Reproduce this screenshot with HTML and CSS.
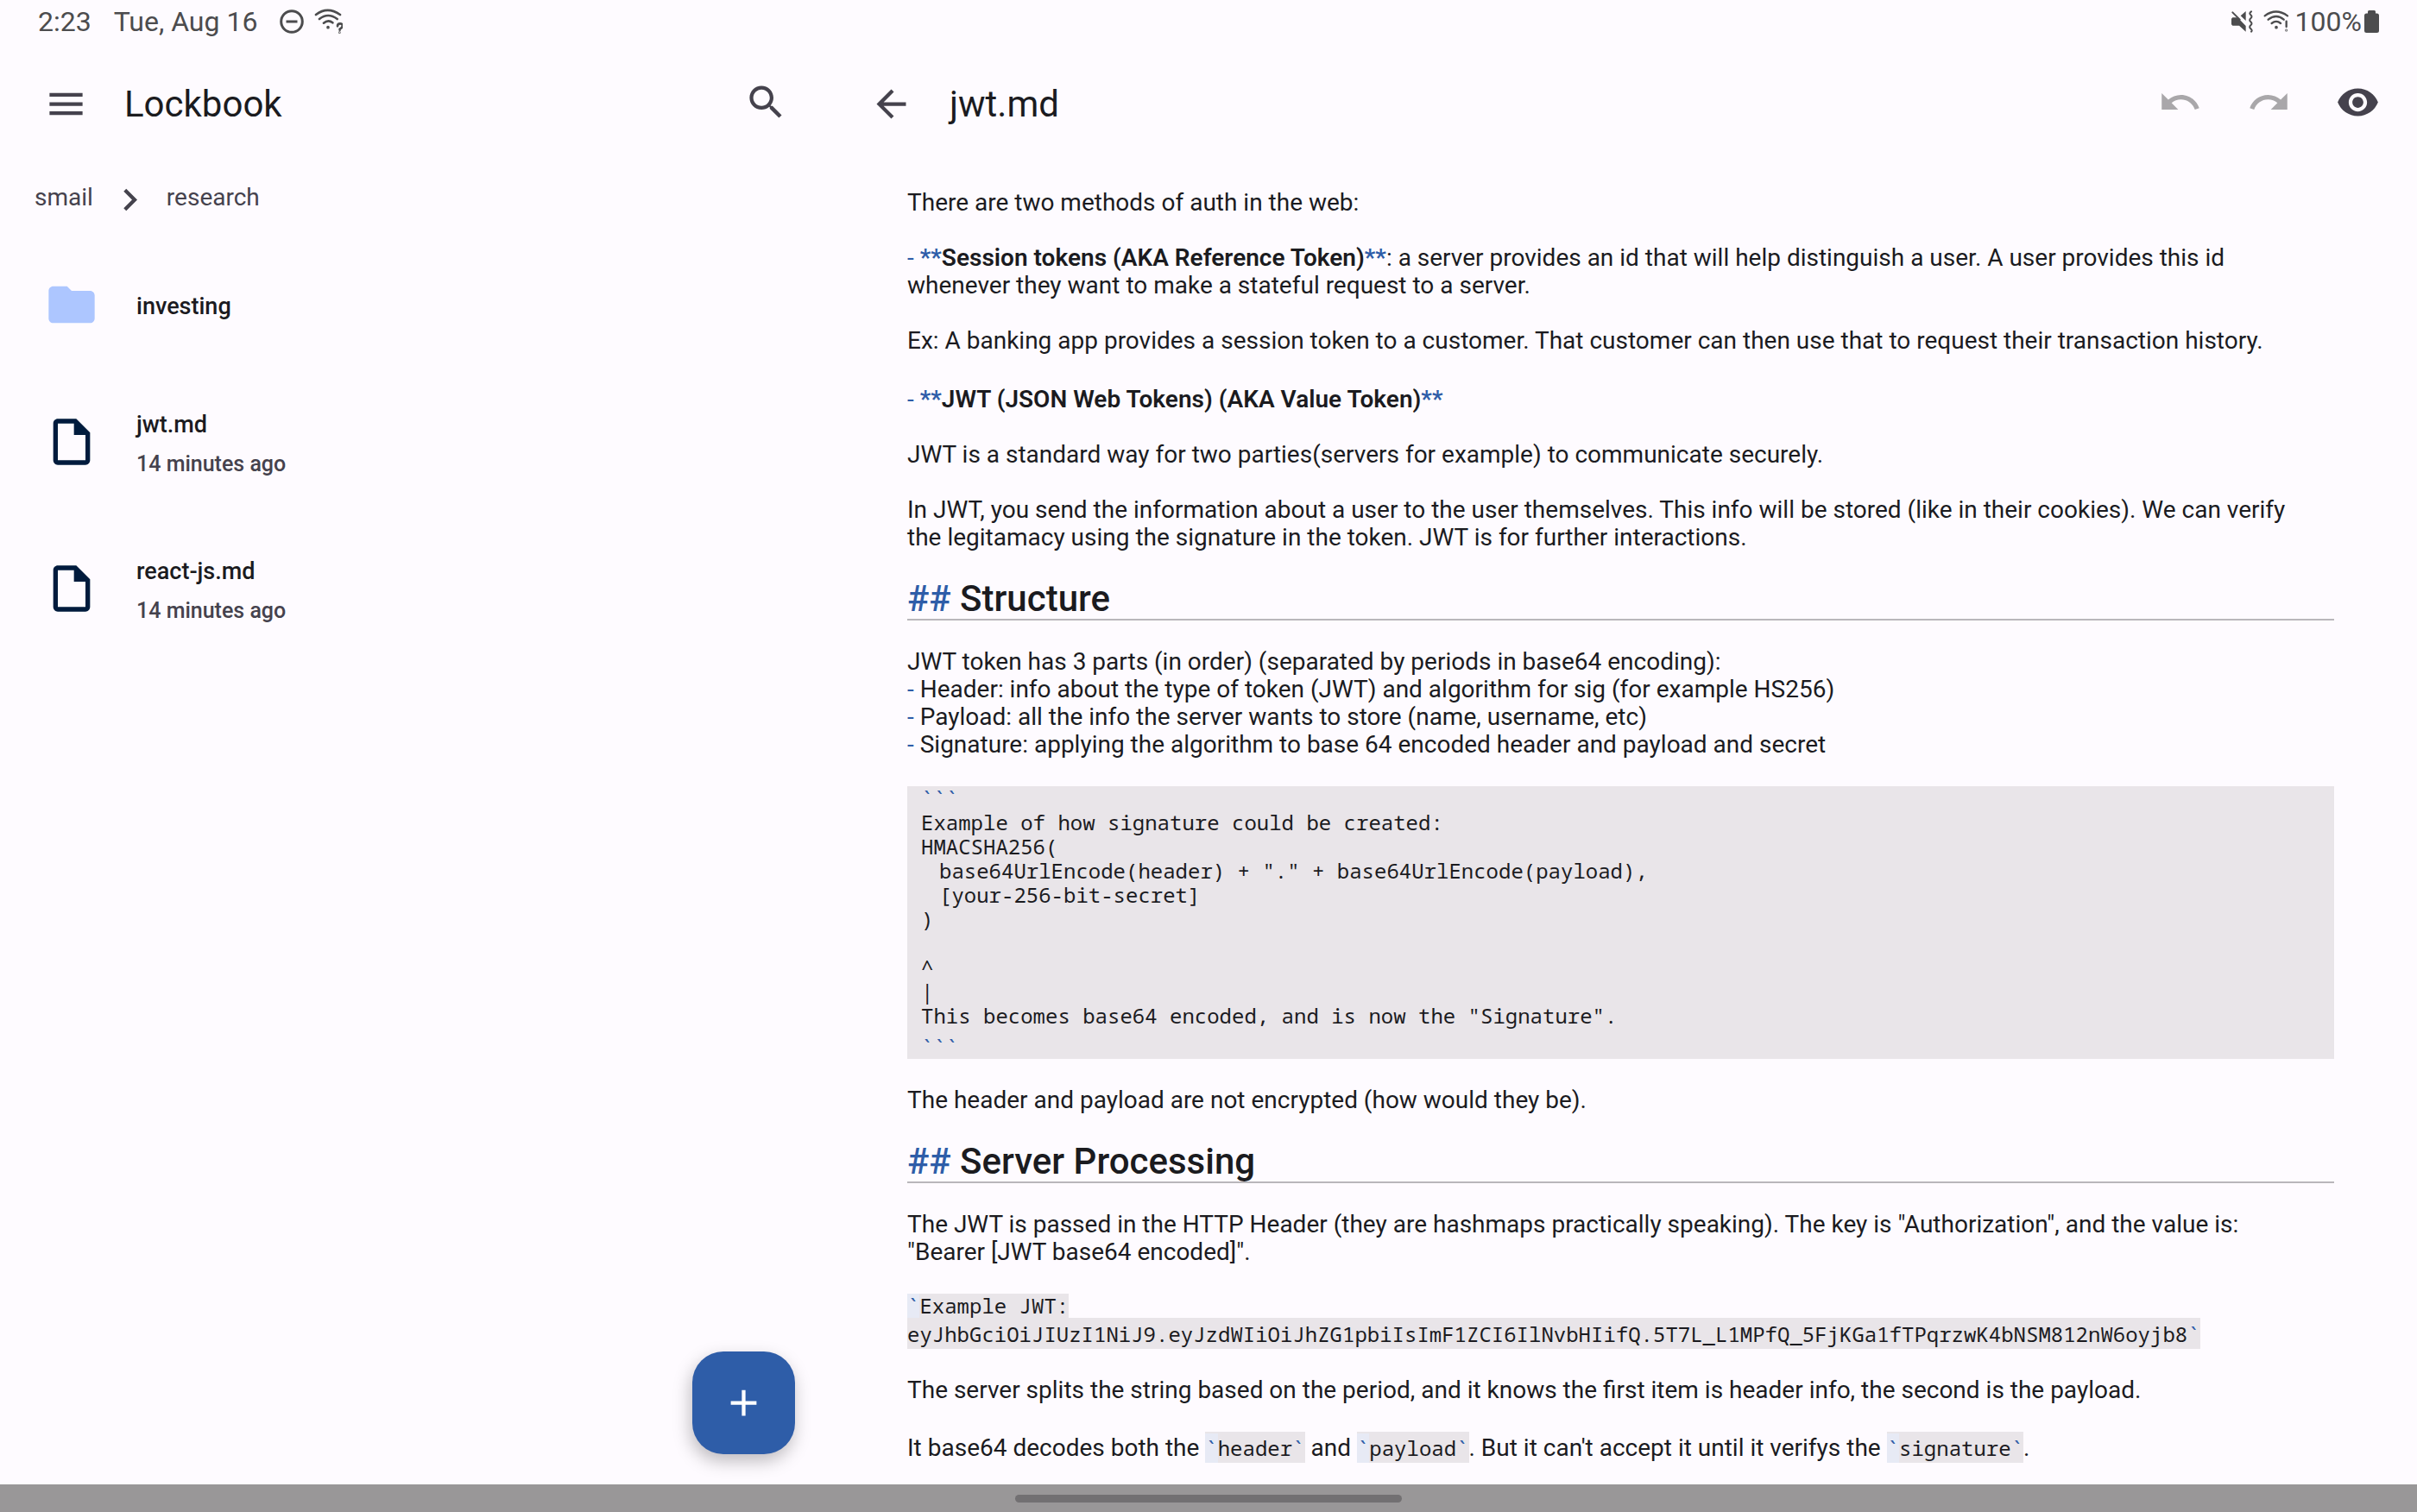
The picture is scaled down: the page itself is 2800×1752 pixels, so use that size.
FILE: index.html
```html
<!DOCTYPE html>
<html lang="en">
<head>
<meta charset="utf-8">
<title>Lockbook</title>
<link rel="stylesheet" href="styles.css">
</head>
<body>
<header class="status">
  <div class="status-group status-left">
    <span class="clock">2:23</span>
    <span>Tue, Aug 16</span>
    <span class="status-icons">
      <svg width="28" height="28" viewBox="0 0 28 28" fill="none" stroke="currentColor" stroke-width="3" aria-hidden="true"><circle cx="14" cy="14" r="12.3"/><path d="M7.5 14h13"/></svg>
      <svg width="33" height="30" viewBox="0 0 99 90" fill="none" stroke="currentColor" stroke-width="8" stroke-linecap="round" aria-hidden="true"><path d="M6 21Q46-10 90 21M18 36q30-24 62 0M33 50q16-13 31-1M81 61q0-9 9-9t8 9q0 5-9 10v3"/><circle cx="48" cy="65" r="3" stroke-width="5"/><circle cx="88" cy="83" r="1" stroke-width="6"/></svg>
    </span>
  </div>
  <div class="status-group status-right">
    <svg class="muted" width="26" height="26" viewBox="0 0 78 78" fill="currentColor" aria-hidden="true"><path d="M3 29l4-4h14l6 2 26 27v20L30 53H7l-4-4zM35 19L53 3v33z"/><path d="M7 7l25 25M72 4q-9 6-2 12t0 12 0 12 0 12 0 12 2 10" fill="none" stroke="currentColor" stroke-width="6" stroke-linecap="round"/></svg>
    <svg width="30" height="26" viewBox="0 0 90 78" fill="none" stroke="currentColor" stroke-width="7" stroke-linecap="round" aria-hidden="true"><path d="M5 19Q44-10 84 19M17 32q28-22 54 0M29 45q16-13 31 0M80 38v19"/><circle cx="45" cy="59" r="3" stroke-width="5"/><circle cx="80" cy="69" r="1" stroke-width="7"/></svg>
    <span class="level">100%</span>
    <svg width="17" height="26" viewBox="0 0 17 26" fill="currentColor" aria-hidden="true"><path d="M4 3.500V1.500Q4 0 5.500 0h6Q13 0 13 1.500v2h1.500Q17 3.500 17 6v17.500q0 2.500-2.500 2.500h-12Q0 26 0 23.500V6q0-2.500 2.500-2.500z"/></svg>
  </div>
</header>

<main class="panes">
  <section class="files">
    <div class="appbar">
      <button class="icon-button" aria-label="Menu"><svg viewBox="0 0 24 24"><path d="M3 18h18v-2H3v2zm0-5h18v-2H3v2zm0-7v2h18V6H3z"/></svg></button>
      <h1>Lockbook</h1>
      <div class="actions">
        <button class="icon-button" aria-label="Search"><svg viewBox="0 0 24 24"><path d="M15.500 14h-.79l-.28-.27C15.410 12.590 16 11.110 16 9.500 16 5.910 13.090 3 9.500 3S3 5.910 3 9.500 5.910 16 9.500 16c1.610 0 3.090-.59 4.230-1.570l.27.28v.79l5 4.990L20.490 19l-4.990-5zm-6 0C7.010 14 5 11.990 5 9.500S7.010 5 9.500 5 14 7.010 14 9.500 11.990 14 9.500 14z"/></svg></button>
      </div>
    </div>
    <nav class="crumbs" aria-label="Path">
      <a href="#smail">smail</a>
      <svg class="chevron" viewBox="0 0 24 24" aria-hidden="true"><path d="M10 6L8.590 7.410 13.170 12l-4.580 4.590L10 18l6-6z"/></svg>
      <a href="#research">research</a>
    </nav>
    <ul class="list">
      <li><a class="row folder" href="#investing">
        <svg viewBox="0 0 24 24" aria-hidden="true"><path d="M10 4H4c-1.100 0-1.990.9-1.990 2L2 18c0 1.100.9 2 2 2h16c1.100 0 2-.9 2-2V8c0-1.100-.9-2-2-2h-8l-2-2z"/></svg>
        <span class="label"><span class="name">investing</span></span>
      </a></li>
      <li><a class="row" href="#jwt">
        <svg viewBox="0 0 24 24" aria-hidden="true"><path d="M14 2H6c-1.100 0-1.990.9-1.990 2L4 20c0 1.100.89 2 1.990 2H18c1.100 0 2-.9 2-2V8l-6-6zM6 20V4h7v5h5v11H6z"/></svg>
        <span class="label"><span class="name">jwt.md</span><span class="time">14 minutes ago</span></span>
      </a></li>
      <li><a class="row" href="#react-js">
        <svg viewBox="0 0 24 24" aria-hidden="true"><path d="M14 2H6c-1.100 0-1.990.9-1.990 2L4 20c0 1.100.89 2 1.990 2H18c1.100 0 2-.9 2-2V8l-6-6zM6 20V4h7v5h5v11H6z"/></svg>
        <span class="label"><span class="name">react-js.md</span><span class="time">14 minutes ago</span></span>
      </a></li>
    </ul>
    <button class="fab" aria-label="New file"><svg viewBox="0 0 24 24"><path d="M19 13h-6v6h-2v-6H5v-2h6V5h2v6h6v2z"/></svg></button>
  </section>

  <section class="detail">
    <div class="appbar">
      <button class="icon-button" aria-label="Back"><svg viewBox="0 0 24 24"><path d="M20 11H7.830l5.590-5.590L12 4l-8 8 8 8 1.410-1.410L7.830 13H20v-2z"/></svg></button>
      <h2>jwt.md</h2>
      <div class="actions">
        <button class="icon-button" aria-label="Undo" disabled><svg viewBox="0 0 24 24"><path d="M12.500 8c-2.650 0-5.050.99-6.900 2.600L2 7v9h9l-3.620-3.620c1.390-1.160 3.160-1.880 5.120-1.880 3.540 0 6.550 2.310 7.600 5.500l2.370-.78C21.080 11.030 17.150 8 12.500 8z"/></svg></button>
        <button class="icon-button" aria-label="Redo" disabled><svg viewBox="0 0 24 24"><path d="M18.400 10.600C16.550 8.990 14.150 8 11.500 8c-4.650 0-8.580 3.030-9.960 7.220L3.900 16c1.050-3.190 4.050-5.500 7.600-5.500 1.950 0 3.730.72 5.120 1.880L13 16h9V7l-3.600 3.600z"/></svg></button>
        <button class="icon-button" aria-label="Preview"><svg viewBox="0 0 24 24"><path d="M12 4.500C7 4.500 2.730 7.610 1 12c1.730 4.390 6 7.500 11 7.500s9.270-3.110 11-7.500c-1.730-4.390-6-7.500-11-7.500zM12 17c-2.760 0-5-2.240-5-5s2.240-5 5-5 5 2.240 5 5-2.240 5-5 5zm0-8c-1.660 0-3 1.340-3 3s1.340 3 3 3 3-1.340 3-3-1.340-3-3-3z"/></svg></button>
      </div>
    </div>
    <article class="note">
      <p>There are two methods of auth in the web:</p>
      <p><i>-</i> <b><i>**</i>Session tokens (AKA Reference Token)<i>**</i></b>: a server provides an id that will help distinguish a user. A user provides this id whenever they want to make a stateful request to a server.</p>
      <p>Ex: A banking app provides a session token to a customer. That customer can then use that to request their transaction history.</p>
      <p class="term"><i>-</i> <b><i>**</i>JWT (JSON Web Tokens) (AKA Value Token)<i>**</i></b></p>
      <p>JWT is a standard way for two parties(servers for example) to communicate securely.</p>
      <p>In JWT, you send the information about a user to the user themselves. This info will be stored (like in their cookies). We can verify the legitamacy using the signature in the token. JWT is for further interactions.</p>
      <h3><i>##</i> Structure</h3>
      <p>JWT token has 3 parts (in order) (separated by periods in base64 encoding):<br>
      <i>-</i> Header: info about the type of token (JWT) and algorithm for sig (for example HS256)<br>
      <i>-</i> Payload: all the info the server wants to store (name, username, etc)<br>
      <i>-</i> Signature: applying the algorithm to base 64 encoded header and payload and secret</p>
<pre><i>```</i>
Example of how signature could be created:
HMACSHA256(
	base64UrlEncode(header) + "." + base64UrlEncode(payload),
	[your-256-bit-secret]
)

^
|
This becomes base64 encoded, and is now the "Signature".
<i class="close">```</i></pre>
      <p>The header and payload are not encrypted (how would they be).</p>
      <h3><i>##</i> Server Processing</h3>
      <p>The JWT is passed in the HTTP Header (they are hashmaps practically speaking). The key is "Authorization", and the value is: "Bearer [JWT base64 encoded]".</p>
      <p class="sample"><code class="short"><i class="open">`</i>Example JWT:</code><code>eyJhbGciOiJIUzI1NiJ9.eyJzdWIiOiJhZG1pbiIsImF1ZCI6IlNvbHIifQ.5T7L_L1MPfQ_5FjKGa1fTPqrzwK4bNSM812nW6oyjb8<i>`</i></code></p>
      <p>The server splits the string based on the period, and it knows the first item is header info, the second is the payload.</p>
      <p>It base64 decodes both the <code><i class="open">`</i>header<i>`</i></code> and <code><i class="open">`</i>payload<i>`</i></code>. But it can't accept it until it verifys the <code><i class="open">`</i>signature<i>`</i></code>.</p>
    </article>
  </section>
</main>

<footer class="gesture-bar"><span class="handle"></span></footer>
</body>
</html>
```
FILE: styles.css
```css
* { box-sizing: border-box; }

body {
  margin: 0;
  min-height: 100vh;
  display: flex;
  flex-direction: column;
  background: #fefbff;
  color: #1b1b1f;
  font: 28px/32px Roboto, "Liberation Sans", sans-serif;
}

h1, h2, h3, p, pre, ul { margin: 0; padding: 0; }
a { color: inherit; text-decoration: none; }
svg { display: block; flex: none; }
button { border: 0; padding: 0; background: none; color: inherit; font: inherit; }

/* Status bar */
.status {
  display: flex;
  justify-content: space-between;
  padding: 6px 44px 8px 44px;
  color: #4c4c4e;
  font-size: 32px;
  line-height: 38px;
}
.status-group, .status-icons { display: flex; align-items: center; }
.status-left { gap: 26px; }
.status-icons { gap: 12px; }
.muted { margin-right: 12px; }
.level { padding: 0 3px 0 7px; }

/* Panes */
.panes {
  flex: 1;
  display: grid;
  grid-template-columns: 34% 1fr;
}
.files { position: relative; }

.appbar {
  height: 136px;
  display: flex;
  align-items: center;
}
.appbar h1, .appbar h2 {
  padding-top: 2px;
  font-size: 42px;
  line-height: 48px;
  font-weight: 400;
}
.files .appbar { padding: 0 39px 0 51px; }
.files h1 { padding-left: 42px; }
.detail .appbar { padding: 0 43px 0 55px; }
.detail h2 { padding-left: 42px; }
.actions {
  margin-left: auto;
  padding-bottom: 4px;
  display: flex;
  gap: 52px;
}
.icon-button { color: #45424d; }
.icon-button:disabled { color: #a9a7aa; }
.icon-button svg, .chevron, .fab svg {
  width: 51px;
  height: 51px;
  fill: currentColor;
}

.crumbs {
  display: flex;
  align-items: center;
  gap: 17px;
  padding: 18px 40px 21px;
  color: #45424d;
}
.crumbs a { padding-bottom: 6px; }

/* File list */
.list { list-style: none; }
.row {
  display: flex;
  align-items: center;
  gap: 43px;
  height: 170px;
  padding-left: 51px;
  color: #001b3d;
  font-weight: 500;
}
.row.folder { height: 149px; color: #adc6ff; }
.row svg { width: 64px; height: 64px; fill: currentColor; }
.label {
  display: flex;
  flex-direction: column;
  gap: 15px;
  padding-top: 4px;
}
.name { color: #1b1b1f; font-size: 27px; }
.time { color: #45424d; font-size: 25px; line-height: 30px; }

.fab {
  position: absolute;
  right: 31px;
  bottom: 35px;
  display: grid;
  place-items: center;
  width: 119px;
  height: 119px;
  border-radius: 36px;
  background: #2e5da8;
  color: #fff;
  box-shadow: -2px 8px 20px rgba(0, 0, 0, 0.26);
}

/* Note */
.note { padding: 31px 96px 16px 99px; }
.note p { margin-bottom: 32px; padding-right: 16px; }
.note p.term { margin-top: 36px; }
.note p:last-child { margin-bottom: 0; }
.note i { color: #2e5da8; font-style: normal; }
.note b { font-weight: 600; }
.note h3 {
  margin-bottom: 32px;
  border-bottom: 2px solid #b9b7bb;
  font-size: 42px;
  line-height: 46px;
  font-weight: 500;
}
.note pre, .note code {
  background: #e9e5e9;
  font-family: "Noto Sans Mono", "DejaVu Sans Mono", monospace;
  font-size: 24px;
}
.note pre {
  margin-bottom: 32px;
  padding-left: 16px;
  line-height: 28px;
  tab-size: 21px;
}
.note pre .close { display: block; padding-top: 8px; }
.note code { display: inline-block; padding-top: 2px; line-height: 34px; }
.note .open { display: inline-block; background: #e7eaf5; }
.sample {
  display: flex;
  flex-direction: column;
  align-items: flex-start;
}
.note .short { padding-top: 0; line-height: 28px; }

/* System gesture bar */
.gesture-bar {
  height: 32px;
  display: flex;
  justify-content: center;
  align-items: center;
  background: #999798;
}
.handle {
  width: 16%;
  min-width: 120px;
  height: 9px;
  border-radius: 5px;
  background: #727072;
}
```
